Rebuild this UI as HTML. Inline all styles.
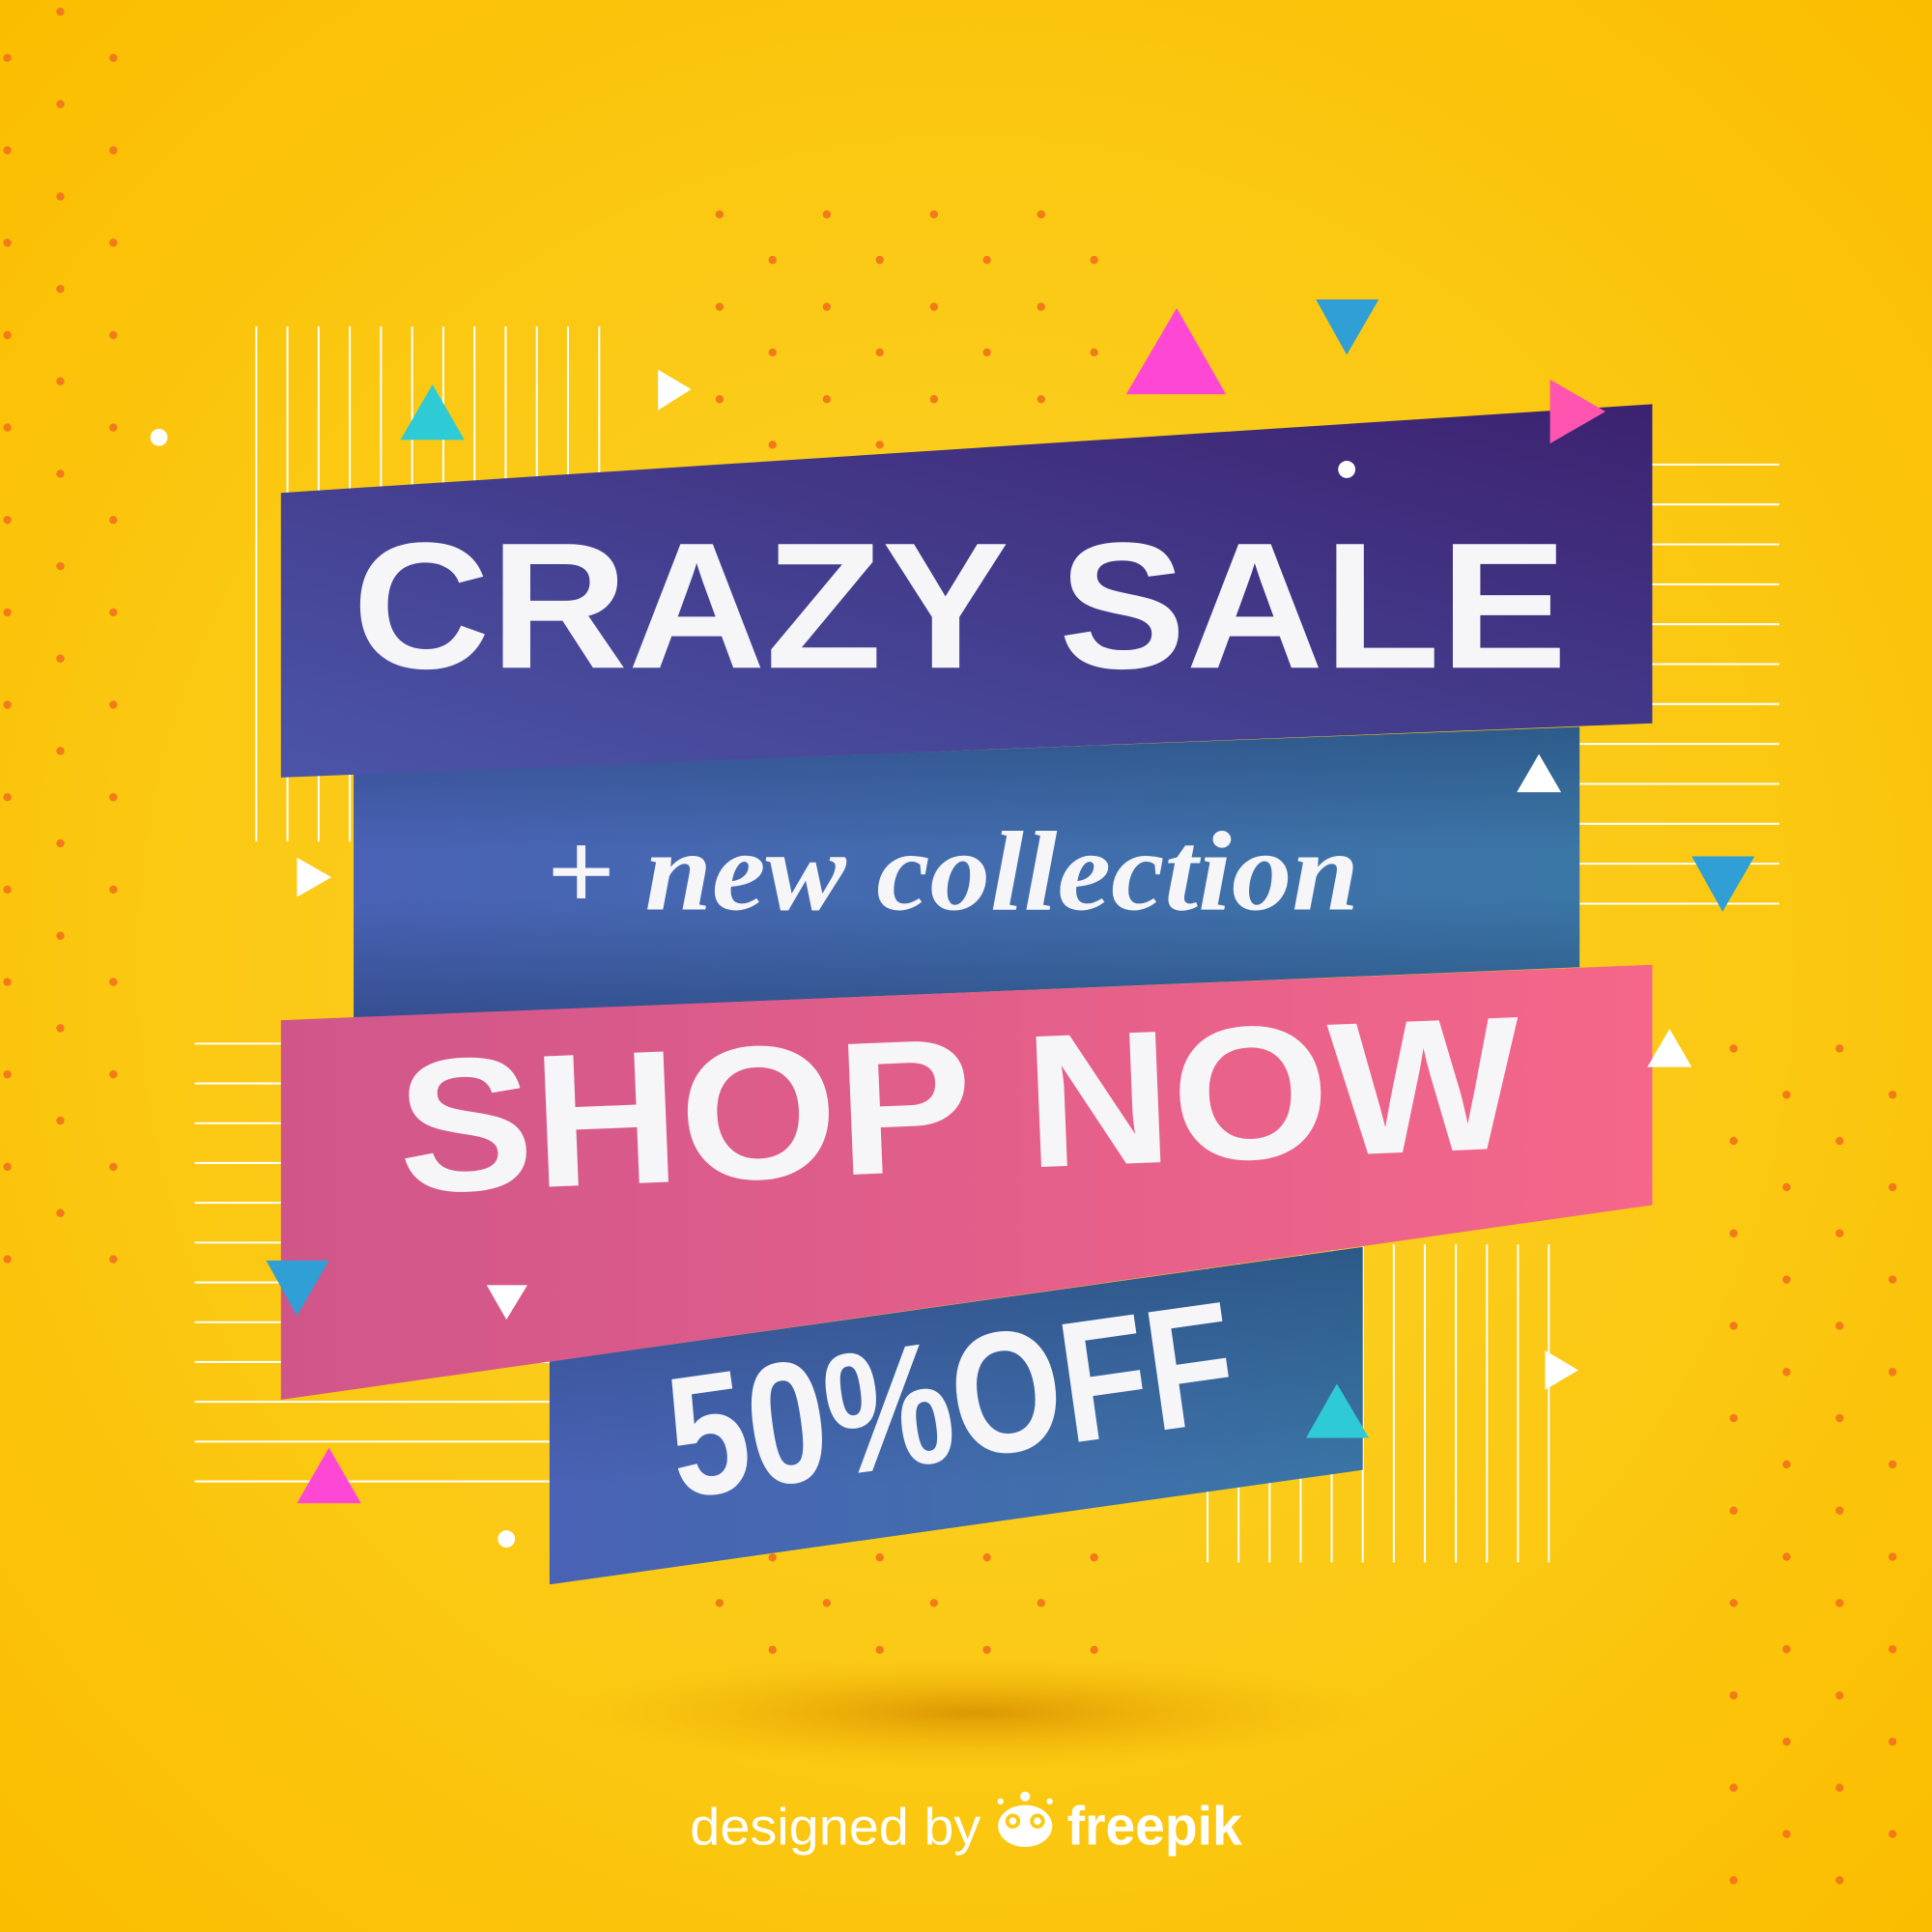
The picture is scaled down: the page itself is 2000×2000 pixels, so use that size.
<!DOCTYPE html>
<html><head><meta charset="utf-8"><style>html,body{margin:0;padding:0;width:2000px;height:2000px;overflow:hidden}</style></head>
<body>
<svg width="2000" height="2000" viewBox="0 0 1568 1568" xmlns="http://www.w3.org/2000/svg">
<defs>
<radialGradient id="bg" cx="0.5" cy="0.5" r="0.7"><stop offset="0" stop-color="#fcd42e"/><stop offset="0.6" stop-color="#fbc812"/><stop offset="1" stop-color="#fbbd00"/></radialGradient>
<linearGradient id="g1" x1="0" y1="1" x2="1" y2="0"><stop offset="0" stop-color="#4b55a8"/><stop offset="1" stop-color="#3c2270"/></linearGradient>
<linearGradient id="g2" x1="0" y1="0.5" x2="1" y2="0.5"><stop offset="0" stop-color="#4a62b5"/><stop offset="1" stop-color="#3a76a6"/></linearGradient>
<linearGradient id="g3" x1="0" y1="0.5" x2="1" y2="0.5"><stop offset="0" stop-color="#d0568a"/><stop offset="1" stop-color="#f4678a"/></linearGradient>
<linearGradient id="fd" x1="0" y1="0" x2="0" y2="1"><stop offset="0" stop-color="#1a3560" stop-opacity="0.45"/><stop offset="1" stop-color="#1a3560" stop-opacity="0"/></linearGradient>
<linearGradient id="fu" x1="0" y1="1" x2="0" y2="0"><stop offset="0" stop-color="#1a3560" stop-opacity="0.45"/><stop offset="1" stop-color="#1a3560" stop-opacity="0"/></linearGradient>
<radialGradient id="sh"><stop offset="0" stop-color="#d48a00" stop-opacity="0.8"/><stop offset="1" stop-color="#f0b000" stop-opacity="0"/></radialGradient>
<clipPath id="c2"><polygon points="287,628 1282,590 1282,785 287,826"/></clipPath>
<clipPath id="c4"><polygon points="446,1105 1106,1012 1106,1193 446,1286"/></clipPath>
<pattern id="dl" x="6" y="47" width="86" height="75" patternUnits="userSpaceOnUse"><circle cx="0" cy="0" r="3.3" fill="#f27a1a"/><circle cx="43" cy="-37.5" r="3.3" fill="#f27a1a"/><circle cx="43" cy="37.5" r="3.3" fill="#f27a1a"/><circle cx="86" cy="0" r="3.3" fill="#f27a1a"/><circle cx="0" cy="75" r="3.3" fill="#f27a1a"/><circle cx="86" cy="75" r="3.3" fill="#f27a1a"/></pattern>
</defs>
<rect width="1568" height="1568" fill="url(#bg)"/>
<ellipse cx="790" cy="1390" rx="330" ry="45" fill="url(#sh)"/>
<rect x="0" y="0" width="100" height="1035" fill="url(#dl)"/>
<g fill="#f27a1a">
<circle cx="584" cy="174" r="3.3"/><circle cx="671" cy="174" r="3.3"/><circle cx="758" cy="174" r="3.3"/><circle cx="845" cy="174" r="3.3"/>
<circle cx="627" cy="211" r="3.3"/><circle cx="714" cy="211" r="3.3"/><circle cx="801" cy="211" r="3.3"/><circle cx="888" cy="211" r="3.3"/>
<circle cx="584" cy="249" r="3.3"/><circle cx="671" cy="249" r="3.3"/><circle cx="758" cy="249" r="3.3"/><circle cx="845" cy="249" r="3.3"/>
<circle cx="627" cy="286" r="3.3"/><circle cx="714" cy="286" r="3.3"/><circle cx="801" cy="286" r="3.3"/><circle cx="888" cy="286" r="3.3"/>
<circle cx="584" cy="324" r="3.3"/><circle cx="671" cy="324" r="3.3"/><circle cx="758" cy="324" r="3.3"/><circle cx="845" cy="324" r="3.3"/>
<circle cx="627" cy="361" r="3.3"/><circle cx="714" cy="361" r="3.3"/>
<circle cx="627" cy="1264" r="3.3"/><circle cx="714" cy="1264" r="3.3"/><circle cx="801" cy="1264" r="3.3"/><circle cx="888" cy="1264" r="3.3"/>
<circle cx="584" cy="1301" r="3.3"/><circle cx="671" cy="1301" r="3.3"/><circle cx="758" cy="1301" r="3.3"/><circle cx="845" cy="1301" r="3.3"/>
<circle cx="627" cy="1339" r="3.3"/><circle cx="714" cy="1339" r="3.3"/><circle cx="801" cy="1339" r="3.3"/><circle cx="888" cy="1339" r="3.3"/>
</g>
<pattern id="dr" x="1407" y="851" width="86" height="75" patternUnits="userSpaceOnUse"><circle cx="0" cy="0" r="3.3" fill="#f27a1a"/><circle cx="43" cy="37.5" r="3.3" fill="#f27a1a"/><circle cx="86" cy="0" r="3.3" fill="#f27a1a"/><circle cx="0" cy="75" r="3.3" fill="#f27a1a"/><circle cx="86" cy="75" r="3.3" fill="#f27a1a"/></pattern>
<rect x="1400" y="845" width="168" height="690" fill="url(#dr)"/>
<g stroke="#fff" stroke-width="1.6">
<path d="M208 265V683M233.3 265V683M258.6 265V683M283.9 265V683M309.2 265V683M334.5 265V683M359.8 265V683M385.1 265V683M410.4 265V683M435.7 265V683M461 265V683M486.3 265V683"/>
<path d="M1282 377H1444M1282 409.4H1444M1282 441.8H1444M1282 474.2H1444M1282 506.6H1444M1282 539H1444M1282 571.4H1444M1282 603.8H1444M1282 636.2H1444M1282 668.6H1444M1282 701H1444M1282 733.4H1444"/>
<path d="M158 847H446M158 879.3H446M158 911.6H446M158 943.9H446M158 976.2H446M158 1008.5H446M158 1040.8H446M158 1073.1H446M158 1105.4H446M158 1137.7H446M158 1170H446M158 1202.3H446"/>
<path d="M980 1010V1268M1005.2 1010V1268M1030.4 1010V1268M1055.6 1010V1268M1080.8 1010V1268M1106 1010V1268M1131.2 1010V1268M1156.4 1010V1268M1181.6 1010V1268M1206.8 1010V1268M1232 1010V1268M1257 1010V1268"/>
</g>
<polygon points="287,628 1282,590 1282,785 287,826" fill="url(#g2)"/>
<g clip-path="url(#c2)">
<rect x="287" y="580" width="995" height="110" fill="url(#fd)"/>
<rect x="287" y="730" width="995" height="100" fill="url(#fu)"/>
</g>
<polygon points="228,400 1341,328 1341,587 228,631" fill="url(#g1)"/>
<polygon points="446,1105 1106,1012 1106,1193 446,1286" fill="url(#g2)"/>
<g clip-path="url(#c4)">
<rect x="446" y="1005" width="660" height="200" fill="url(#fd)"/>
</g>
<polygon points="228,828 1341,783 1341,978 228,1136" fill="url(#g3)"/>
<g fill="#f6f5f8" font-family="Liberation Sans, sans-serif" font-weight="bold">
<text x="286" y="542" font-size="146" textLength="986" lengthAdjust="spacingAndGlyphs">CRAZY SALE</text>
<text transform="translate(325,968) rotate(-2.3)" font-size="154" textLength="912" lengthAdjust="spacingAndGlyphs">SHOP NOW</text>
<text transform="translate(550,1216) rotate(-8)" font-size="140" textLength="462" lengthAdjust="spacingAndGlyphs">50%OFF</text>
</g>
<text x="443" y="738" fill="#f6f5f8" font-family="Liberation Serif, serif" font-style="italic" font-weight="bold" font-size="92" textLength="660" lengthAdjust="spacingAndGlyphs">+ new collection</text>
<polygon points="351,312 325,357 377,357" fill="#2ecbd6"/>
<polygon points="534,300 534,333 561,316" fill="#fff"/>
<polygon points="955,250 914,320 995,320" fill="#ff47d6"/>
<polygon points="1068,243 1119,243 1093,288" fill="#309fd6"/>
<polygon points="1258,308 1258,360 1303,334" fill="#ff54b0"/>
<circle cx="129" cy="355" r="7" fill="#fff"/><circle cx="1093" cy="381" r="7" fill="#fff"/><circle cx="411" cy="1249" r="7" fill="#fff"/>
<polygon points="1249,612 1231,643 1267,643" fill="#fff"/>
<polygon points="1373,695 1424,695 1398,740" fill="#309fd6"/>
<polygon points="241,696 241,728 269,712" fill="#fff"/>
<polygon points="1355,835 1337,866 1373,866" fill="#fff"/>
<polygon points="216,1023 267,1023 241,1068" fill="#309fd6"/>
<polygon points="395,1043 428,1043 411,1071" fill="#fff"/>
<polygon points="1254,1096 1254,1128 1281,1112" fill="#fff"/>
<polygon points="1085,1123 1060,1167 1111,1167" fill="#2ecbd6"/>
<polygon points="267,1175 241,1220 293,1220" fill="#ff47d6"/>
<text x="560" y="1497" fill="#fff" font-family="Liberation Sans, sans-serif" font-size="42" textLength="236" lengthAdjust="spacingAndGlyphs">designed by</text>
<g fill="#fff">
<ellipse cx="832" cy="1482" rx="22" ry="17"/>
<circle cx="822" cy="1478" r="6" fill="#fbc812"/><circle cx="842" cy="1478" r="6" fill="#fbc812"/>
<circle cx="822" cy="1478" r="3"/><circle cx="842" cy="1478" r="3"/>
<circle cx="832" cy="1458" r="4"/><circle cx="812" cy="1462" r="2.5"/><circle cx="852" cy="1462" r="2.5"/>
</g>
<text x="866" y="1497" fill="#fff" font-family="Liberation Sans, sans-serif" font-weight="bold" font-size="44" textLength="142" lengthAdjust="spacingAndGlyphs">freepik</text>
</svg>
</body></html>
